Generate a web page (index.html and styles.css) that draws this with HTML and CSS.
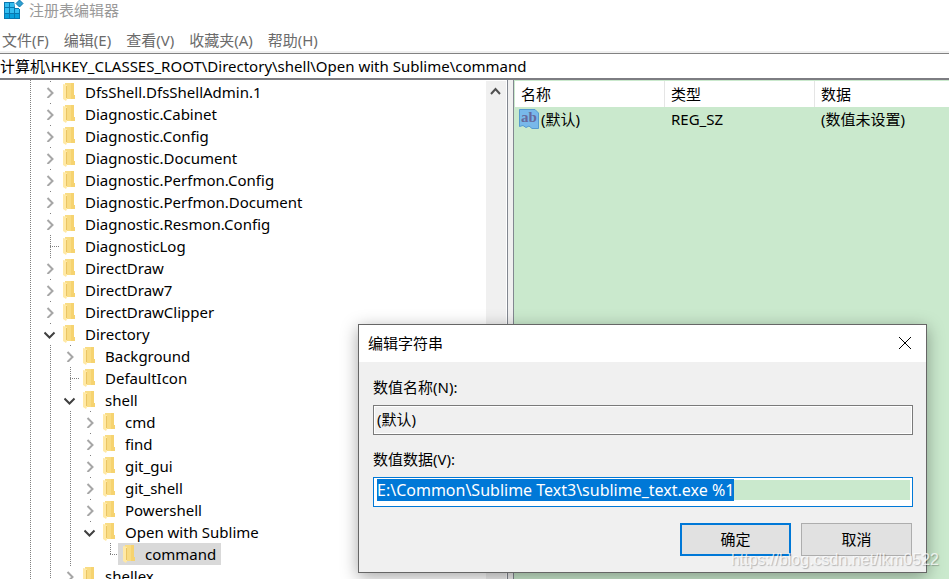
FILE: index.html
```
<!DOCTYPE html>
<html lang="zh-CN">
<head>
<meta charset="utf-8">
<title>注册表编辑器</title>
<link rel="stylesheet" href="styles.css">
</head>
<body>
<svg class="defs" aria-hidden="true">
  <symbol id="folder" viewBox="0 0 12 18">
    <path d="M2 0H11V12H12V16H2Z" fill="#f9dc83"/>
    <path d="M8 0H11V12H12V16H8Z" fill="#f6d370"/>
    <path d="M0 1L4 2V16L3 18L0 16Z" fill="#ffe9a6"/>
    <path d="M3.500 3V15" stroke="#eac565" fill="none"/>
  </symbol>
  <symbol id="closed" viewBox="0 0 12 12">
    <path d="M3.500 2L8.500 7L3.500 12" fill="none" stroke="#a6a6a6" stroke-width="2"/>
  </symbol>
  <symbol id="open" viewBox="0 0 12 12">
    <path d="M0.500 4.500L5.500 9.500L10.500 4.500" fill="none" stroke="#404040" stroke-width="2"/>
  </symbol>
</svg>
<header class="titlebar">
  <svg class="app-icon" width="20" height="20" viewBox="0 0 20 20" aria-hidden="true">
    <path d="M0 2H15V9H16V19H0Z" fill="#0878b0"/>
    <path d="M1 3H5V7H1ZM6 3H10V7H6ZM1 8H5V13H1ZM6 8H10V13H6ZM11 9H15V13H11Z" fill="#35bdf0"/>
    <path d="M1 14H5V18H1ZM6 14H10V18H6ZM11 14H15V18H11Z" fill="#08a0dc"/>
    <path d="M10 0H20V8H11Z" fill="#fff"/>
    <path d="M15.500 0L19 3.500L15.500 7L12 3.500Z" fill="#2d9fd0" stroke="#0878b0"/>
  </svg>
  <span>注册表编辑器</span>
</header>
<nav class="menubar">
  <button type="button">文件(F)</button>
  <button type="button">编辑(E)</button>
  <button type="button">查看(V)</button>
  <button type="button">收藏夹(A)</button>
  <button type="button">帮助(H)</button>
</nav>
<input class="address" type="text" aria-label="地址" value="计算机\HKEY_CLASSES_ROOT\Directory\shell\Open with Sublime\command">
<main class="panes">
  <section class="tree-pane">
    <ul class="tree">
      <li><div class="row"><button class="toggle" type="button" aria-label="展开"><svg><use href="#closed"/></svg></button><button class="key" type="button"><svg><use href="#folder"/></svg>DfsShell.DfsShellAdmin.1</button></div></li>
      <li><div class="row"><button class="toggle" type="button" aria-label="展开"><svg><use href="#closed"/></svg></button><button class="key" type="button"><svg><use href="#folder"/></svg>Diagnostic.Cabinet</button></div></li>
      <li><div class="row"><button class="toggle" type="button" aria-label="展开"><svg><use href="#closed"/></svg></button><button class="key" type="button"><svg><use href="#folder"/></svg>Diagnostic.Config</button></div></li>
      <li><div class="row"><button class="toggle" type="button" aria-label="展开"><svg><use href="#closed"/></svg></button><button class="key" type="button"><svg><use href="#folder"/></svg>Diagnostic.Document</button></div></li>
      <li><div class="row"><button class="toggle" type="button" aria-label="展开"><svg><use href="#closed"/></svg></button><button class="key" type="button"><svg><use href="#folder"/></svg>Diagnostic.Perfmon.Config</button></div></li>
      <li><div class="row"><button class="toggle" type="button" aria-label="展开"><svg><use href="#closed"/></svg></button><button class="key" type="button"><svg><use href="#folder"/></svg>Diagnostic.Perfmon.Document</button></div></li>
      <li><div class="row"><button class="toggle" type="button" aria-label="展开"><svg><use href="#closed"/></svg></button><button class="key" type="button"><svg><use href="#folder"/></svg>Diagnostic.Resmon.Config</button></div></li>
      <li><div class="row leaf"><button class="key" type="button"><svg><use href="#folder"/></svg>DiagnosticLog</button></div></li>
      <li><div class="row"><button class="toggle" type="button" aria-label="展开"><svg><use href="#closed"/></svg></button><button class="key" type="button"><svg><use href="#folder"/></svg>DirectDraw</button></div></li>
      <li><div class="row"><button class="toggle" type="button" aria-label="展开"><svg><use href="#closed"/></svg></button><button class="key" type="button"><svg><use href="#folder"/></svg>DirectDraw7</button></div></li>
      <li><div class="row"><button class="toggle" type="button" aria-label="展开"><svg><use href="#closed"/></svg></button><button class="key" type="button"><svg><use href="#folder"/></svg>DirectDrawClipper</button></div></li>
      <li class="more"><div class="row"><button class="toggle" type="button" aria-label="折叠"><svg><use href="#open"/></svg></button><button class="key" type="button"><svg><use href="#folder"/></svg>Directory</button></div>
        <ul>
          <li><div class="row"><button class="toggle" type="button" aria-label="展开"><svg><use href="#closed"/></svg></button><button class="key" type="button"><svg><use href="#folder"/></svg>Background</button></div></li>
          <li><div class="row leaf"><button class="key" type="button"><svg><use href="#folder"/></svg>DefaultIcon</button></div></li>
          <li><div class="row"><button class="toggle" type="button" aria-label="折叠"><svg><use href="#open"/></svg></button><button class="key" type="button"><svg><use href="#folder"/></svg>shell</button></div>
            <ul>
              <li><div class="row"><button class="toggle" type="button" aria-label="展开"><svg><use href="#closed"/></svg></button><button class="key" type="button"><svg><use href="#folder"/></svg>cmd</button></div></li>
              <li><div class="row"><button class="toggle" type="button" aria-label="展开"><svg><use href="#closed"/></svg></button><button class="key" type="button"><svg><use href="#folder"/></svg>find</button></div></li>
              <li><div class="row"><button class="toggle" type="button" aria-label="展开"><svg><use href="#closed"/></svg></button><button class="key" type="button"><svg><use href="#folder"/></svg>git_gui</button></div></li>
              <li><div class="row"><button class="toggle" type="button" aria-label="展开"><svg><use href="#closed"/></svg></button><button class="key" type="button"><svg><use href="#folder"/></svg>git_shell</button></div></li>
              <li><div class="row"><button class="toggle" type="button" aria-label="展开"><svg><use href="#closed"/></svg></button><button class="key" type="button"><svg><use href="#folder"/></svg>Powershell</button></div></li>
              <li><div class="row"><button class="toggle" type="button" aria-label="折叠"><svg><use href="#open"/></svg></button><button class="key" type="button"><svg><use href="#folder"/></svg>Open with Sublime</button></div>
                <ul>
                  <li><div class="row leaf"><button class="key selected" type="button"><svg><use href="#folder"/></svg>command</button></div></li>
                </ul>
              </li>
            </ul>
          </li>
          <li><div class="row"><button class="toggle" type="button" aria-label="展开"><svg><use href="#closed"/></svg></button><button class="key" type="button"><svg><use href="#folder"/></svg>shellex</button></div></li>
        </ul>
      </li>
    </ul>
    <div class="scrollbar">
      <button type="button" aria-label="向上滚动"><svg width="12" height="12" viewBox="0 0 12 12"><path d="M1 9L5.500 4L10 9" fill="none" stroke="#505050" stroke-width="2"/></svg></button>
    </div>
  </section>
  <section class="values-pane">
    <table class="values">
      <thead>
        <tr><th>名称</th><th>类型</th><th>数据</th></tr>
      </thead>
      <tbody>
        <tr>
          <td class="name"><div class="name-cell"><svg width="20" height="20" viewBox="0 0 20 20" aria-hidden="true">
            <path d="M0.500 0.500H16L19.500 4V19.500H13L10 17L7 18.500L4 16.500L0.500 17.500Z" fill="#78b8ea" stroke="#559bd0"/>
            <text class="ab" x="10" y="13" text-anchor="middle">ab</text>
          </svg><span>(默认)</span></div></td>
          <td>REG_SZ</td>
          <td>(数值未设置)</td>
        </tr>
      </tbody>
    </table>
  </section>
</main>
<form class="dialog" role="dialog" aria-labelledby="dialog-title">
  <div class="dialog-title">
    <span id="dialog-title">编辑字符串</span>
    <button type="button" aria-label="关闭"><svg width="12" height="12" viewBox="0 0 12 12"><path d="M0 0L12 12M12 0L0 12" stroke="#000" fill="none"/></svg></button>
  </div>
  <div class="dialog-body">
    <label for="value-name">数值名称(N):</label>
    <input id="value-name" type="text" value="(默认)" readonly>
    <label for="value-data">数值数据(V):</label>
    <input id="value-data" type="text" value="E:\Common\Sublime Text3\sublime_text.exe %1">
    <div class="actions">
      <button class="primary" type="submit">确定</button>
      <button type="button">取消</button>
    </div>
  </div>
</form>
<div class="watermark">https://blog.csdn.net/lkm0522</div>
<script src="script.js"></script>
</body>
</html>
```
FILE: styles.css
```
* {
  box-sizing: border-box;
}

body {
  position: relative;
  display: flex;
  flex-direction: column;
  height: 100vh;
  margin: 0;
  overflow: hidden;
  background: #fff;
  color: #000;
  font: 15px/22px "Noto Sans", "Noto Sans CJK SC", sans-serif;
}

button,
input {
  margin: 0;
  padding: 0;
  border: 0;
  border-radius: 0;
  background: none;
  color: inherit;
  font: inherit;
  outline: 0;
}

.defs {
  position: absolute;
  width: 0;
  height: 0;
}

.titlebar {
  display: flex;
  align-items: center;
  gap: 5px;
  height: 20px;
  padding-left: 4px;
  color: #999;
}

.menubar {
  display: flex;
  align-items: center;
  gap: 15px;
  height: 33px;
  padding: 8px 0 0 2px;
  border-bottom: 2px solid #f0f0f0;
  color: #6b6b6b;
  line-height: 20px;
}

.address {
  flex: none;
  width: 100%;
  height: 27px;
  padding-bottom: 2px;
  border-top: 1px solid #828282;
  border-bottom: 2px solid #7d7d82;
}

.panes {
  display: flex;
  flex: 1;
  min-height: 0;
  background: #f0f0f0;
}

.tree-pane {
  display: flex;
  justify-content: space-between;
  width: 508px;
  padding-right: 1px;
  border-right: 1px solid #828790;
  background: #fff;
  overflow: hidden;
}

.tree,
.tree ul {
  margin: 0;
  padding: 0;
  list-style: none;
}

.tree {
  flex: 1;
  padding: 1px 0 0 44px;
  background: repeating-linear-gradient(#808080 0 1px, transparent 1px 2px) 30px 0 / 1px 100% no-repeat;
}

.tree ul {
  margin-left: 20px;
}

.tree li {
  background: repeating-linear-gradient(#808080 0 1px, transparent 1px 2px) 6px 0 / 1px 100% no-repeat;
}

.tree li:last-child:not(.more) {
  background-size: 1px 12px;
}

.row {
  display: flex;
  align-items: center;
  height: 22px;
}

.toggle {
  width: 12px;
  height: 20px;
  margin-right: 2px;
  background: #fff;
}

.toggle svg {
  display: block;
  width: 12px;
  height: 12px;
}

.leaf {
  padding-left: 14px;
  background: repeating-linear-gradient(90deg, #808080 0 1px, transparent 1px 2px) 6px 11px / 9px 1px no-repeat;
}

.key {
  display: flex;
  align-items: center;
  gap: 10px;
  height: 22px;
  padding: 0 5px;
  white-space: nowrap;
}

.key svg {
  width: 12px;
  height: 18px;
}

.selected {
  background: #d9d9d9;
}

.scrollbar {
  width: 20px;
  margin-top: 1px;
  background: #f0f0f0;
}

.scrollbar button {
  display: flex;
  align-items: center;
  justify-content: center;
  width: 100%;
  height: 20px;
}

.values-pane {
  flex: 1;
  margin-left: 5px;
  padding: 1px 0 0 1px;
  border-left: 1px solid #828790;
  background: #cae9cd;
}

.values {
  width: 100%;
  border-spacing: 0;
  table-layout: fixed;
}

.values th {
  height: 26px;
  padding: 0 6px;
  background: #fff;
  font-weight: 400;
  text-align: left;
}

.values th:not(:last-child) {
  width: 150px;
  border-right: 1px solid #e5e5e5;
}

.values td {
  height: 24px;
  padding: 0 6px;
}

.values .name {
  padding: 0 4px;
}

.name-cell {
  display: flex;
  align-items: center;
  gap: 2px;
}

.ab {
  fill: #66699c;
  font: bold 15px/16px "Liberation Serif", serif;
}

.dialog {
  position: absolute;
  top: 324px;
  left: 358px;
  width: 569px;
  border: 1px solid #666;
  background: #f0f0f0;
  box-shadow: 0 4px 16px rgba(0, 0, 0, 0.35);
}

.dialog-title {
  display: flex;
  align-items: center;
  justify-content: space-between;
  height: 37px;
  padding: 0 15px 2px 9px;
  background: #fff;
}

.dialog-title svg {
  display: block;
}

.dialog-body {
  display: flex;
  flex-direction: column;
  padding: 14px 13px 16px 14px;
}

.dialog-body label {
  margin-bottom: 7px;
}

.dialog-body input {
  height: 30px;
  margin-bottom: 13px;
  padding: 2px 3px 5px;
  border: 1px solid #7a7a7a;
}

#value-name {
  box-shadow: inset 0 0 0 1px #fff;
}

#value-data {
  padding: 2px 2px 6px 3px;
  border-color: #0078d7;
  background: linear-gradient(#cae9cd, #cae9cd) content-box, #fff;
  font-size: 16px;
  line-height: 20px;
}

#value-data::selection {
  background: #0078d7;
  color: #fff;
}

.actions {
  display: flex;
  justify-content: flex-end;
  gap: 10px;
  padding: 3px 1px 0 0;
}

.actions button {
  width: 111px;
  height: 33px;
  padding-bottom: 2px;
  border: 1px solid #adadad;
  background: #e1e1e1;
}

.actions .primary {
  border: 2px solid #0078d7;
}

.watermark {
  position: absolute;
  right: 10px;
  bottom: 8px;
  color: rgba(255, 255, 255, 0.75);
  font: 16px/22px "Liberation Sans", sans-serif;
  text-shadow: 1px 1px 1px rgba(0, 0, 0, 0.25);
  pointer-events: none;
}
```
FILE: script.js
```
const valueData = document.getElementById("value-data");
valueData.focus();
valueData.select();
```
